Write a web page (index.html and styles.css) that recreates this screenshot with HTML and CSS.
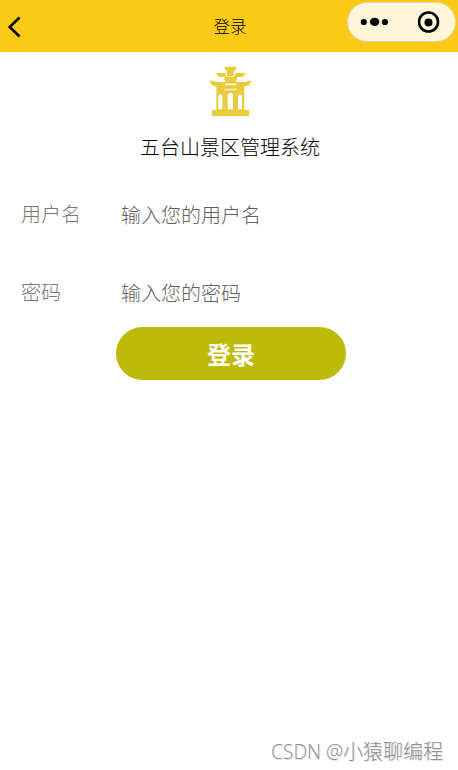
FILE: index.html
```
<!DOCTYPE html>
<html lang="zh-CN">
<head>
  <meta charset="utf-8">
  <title>登录</title>
  <link rel="stylesheet" href="styles.css">
</head>
<body>
  <div class="navbar">
    <svg class="back" width="14" height="22" viewBox="0 0 14 22"><path d="M12.5 1.5L2.8 11l9.7 9.5" fill="none" stroke="#000" stroke-width="2.6"/></svg>
    <div class="title">登录</div>
    <div class="capsule">
      <svg class="dots" width="28" height="10" viewBox="0 0 28 10">
        <circle cx="3.8" cy="5" r="3.1"/>
        <ellipse cx="14.6" cy="4.8" rx="4.7" ry="4.1"/>
        <circle cx="24.9" cy="5" r="3.1"/>
      </svg>
      <span class="line"></span>
      <svg class="target" width="22" height="22" viewBox="0 0 22 22">
        <circle cx="10.5" cy="11" r="9.5" fill="none" stroke="#000" stroke-width="2.6"/>
        <circle cx="10.5" cy="11.5" r="4"/>
      </svg>
    </div>
  </div>

  <div class="header">
    <svg class="logo" width="43" height="51" viewBox="27 18 129 153">
      <g fill="#e9cc3d">
        <path d="M73 20h36l-3 11-5 3v14H81V34l-5-3z"/>
        <path d="M47 39h29v6l4 6h-24zM106 39h31l-8 12h-27l4-6z"/>
        <path d="M73 50h38v11H73z"/>
        <path d="M28 61l22 5h24l4-7h28l4 7h23l23-5-8 14-17 5H50l-15-5z"/>
        <path d="M49 78h84v72h14v18H36v-18h13z"/>
      </g>
      <g fill="#fff">
        <path d="M75 70h34v6H75z" opacity=".8"/>
        <path d="M73 86h38v5H73z" opacity=".6"/>
        <path d="M55 148v-37q1-8 6-8 5 0 6 8v37zM83 148v-44q2-6 8-6t8 6v44zM114 148v-37q1-8 6-8 5 0 6 8v37z"/>
      </g>
    </svg>
    <div class="name">五台山景区管理系统</div>
  </div>

  <form class="login">
    <div class="row">
      <label for="user">用户名</label>
      <input id="user" type="text" placeholder="输入您的用户名">
    </div>
    <div class="row">
      <label for="pass">密码</label>
      <input id="pass" type="password" placeholder="输入您的密码">
    </div>
    <button class="submit" type="button">登录</button>
  </form>

  <div class="watermark"><span class="site">CSDN @</span>小猿聊编程</div>
</body>
</html>
```

FILE: styles.css
```
* {
  box-sizing: border-box;
}
body {
  margin: 0;
  height: 770px;
  overflow: hidden;
  display: flex;
  flex-direction: column;
  background-color: #fff;
  font-family: "Noto Sans CJK SC", sans-serif;
  font-weight: 300;
}
.navbar {
  height: 52px;
  display: grid;
  grid-template-columns: 1fr 60px 1fr;
  align-items: center;
  background-color: #fbca17;
}
.back {
  margin-left: 7px;
  margin-top: 1px;
}
.title {
  padding-left: 2px;
  text-align: center;
  font-size: 16.5px;
  line-height: 24px;
}
.capsule {
  justify-self: end;
  align-self: start;
  width: 109px;
  height: 40px;
  margin: 2px 2px 0 0;
  padding: 0 15px 0 12px;
  border: 1px solid #e0d5ac;
  border-radius: 20px;
  background-color: #fff6da;
  display: flex;
  align-items: center;
  justify-content: space-between;
}
.line {
  width: 1px;
  height: 23px;
  margin-right: 4px;
  background-color: #fffaf0;
}
.header {
  padding-top: 14px;
  display: flex;
  flex-direction: column;
  align-items: center;
}
.logo {
  margin-left: 2px;
}
.name {
  margin-top: 15px;
  margin-left: 2px;
  font-size: 20px;
  line-height: 30px;
  color: #000;
}
.login {
  padding: 32px 21px 0;
  display: flex;
  flex-direction: column;
}
.row {
  height: 40px;
  margin-bottom: 38px;
  display: flex;
  align-items: center;
}
.row label {
  width: 100px;
  font-size: 20px;
  line-height: 40px;
  color: #777;
}
.row input {
  flex: 1;
  min-width: 0;
  height: 40px;
  padding: 0;
  border: none;
  outline: none;
  background: none;
  font: inherit;
  font-size: 20px;
}
.row input::placeholder {
  color: #606060;
}
.submit {
  width: 230px;
  height: 53px;
  margin-top: -23px;
  margin-left: 95px;
  padding: 0;
  border: none;
  border-radius: 27px;
  background-color: #bdba09;
  color: #fff;
  font-family: inherit;
  font-size: 24px;
  font-weight: bold;
}
.watermark {
  margin-top: auto;
  padding: 0 15px 3px 0;
  text-align: right;
  font-size: 20px;
  line-height: 30px;
  color: #8f8f8f;
  text-shadow: 1px 1px 1px #ddd;
}
.site {
  font-family: "Open Sans", sans-serif;
  font-size: 19.3px;
}
```
